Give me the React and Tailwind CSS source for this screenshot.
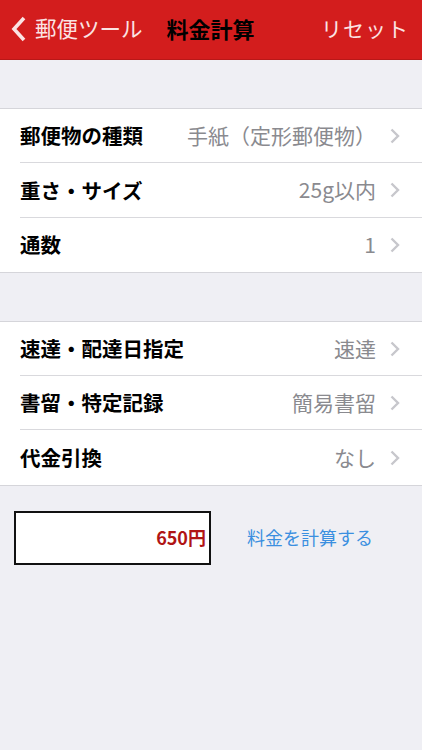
import React from "react";

const font = {
  fontFamily: '"Noto Sans CJK JP", "Noto Sans", sans-serif',
};

const Chevron = () => (
  <svg width="10" height="16" viewBox="0 0 10 16" className="ml-[14px] shrink-0">
    <path d="M1.5 1.5 L8 8 L1.5 14.5" fill="none" stroke="#c7c7cc" strokeWidth="2.4" />
  </svg>
);

const Row = ({ label, value, last }) => (
  <div className="flex h-[54.3px] items-stretch pl-5">
    <div className={`flex flex-1 items-center pr-[22px] ${last ? "" : "border-b border-[#d9d9dd]"}`}>
      <span className="text-[20.5px] font-bold text-black">{label}</span>
      <span className="ml-auto text-[21px] text-[#8a8a8f]">{value}</span>
      <Chevron />
    </div>
  </div>
);

const Group = ({ rows }) => (
  <div className="border-y border-[#d5d5da] bg-white">
    {rows.map((r, i) => (
      <Row key={r.label} label={r.label} value={r.value} last={i === rows.length - 1} />
    ))}
  </div>
);

export default function App() {
  return (
    <div className="min-h-[750px] w-[422px] bg-[#efeff4]" style={font}>
      {/* nav bar */}
      <div className="flex h-[60px] items-center bg-[#d31d1d] border-b border-[#b81818] pb-[2px]">
        <div className="flex items-center pl-[11px]">
          <svg width="16" height="26" viewBox="0 0 16 26">
            <path d="M13 2 L3 13 L13 24" fill="none" stroke="#fbe3e3" strokeWidth="3.6" />
          </svg>
          <span className="ml-[8px] text-[21.5px] text-[#fbe3e3]">郵便ツール</span>
        </div>
        <span className="ml-[24px] text-[22px] font-bold text-black">料金計算</span>
        <span className="ml-auto pr-[13px] text-[21px] text-[#fbe3e3] tracking-[1px]">リセット</span>
      </div>

      <div className="h-[48px]" />
      <Group
        rows={[
          { label: "郵便物の種類", value: "手紙（定形郵便物）" },
          { label: "重さ・サイズ", value: "25g以内" },
          { label: "通数", value: "1" },
        ]}
      />
      <div className="h-[48px]" />
      <Group
        rows={[
          { label: "速達・配達日指定", value: "速達" },
          { label: "書留・特定記録", value: "簡易書留" },
          { label: "代金引換", value: "なし" },
        ]}
      />

      <div className="flex items-center pt-[25px] pl-[14px]">
        <div className="flex h-[54px] w-[197px] items-center justify-end border-[2.5px] border-[#111] bg-white pr-[3px]">
          <span className="text-[18px] font-bold text-[#b01414]">650円</span>
        </div>
        <span className="ml-[36px] text-[18px] text-[#3b8fe0]">料金を計算する</span>
      </div>
    </div>
  );
}
